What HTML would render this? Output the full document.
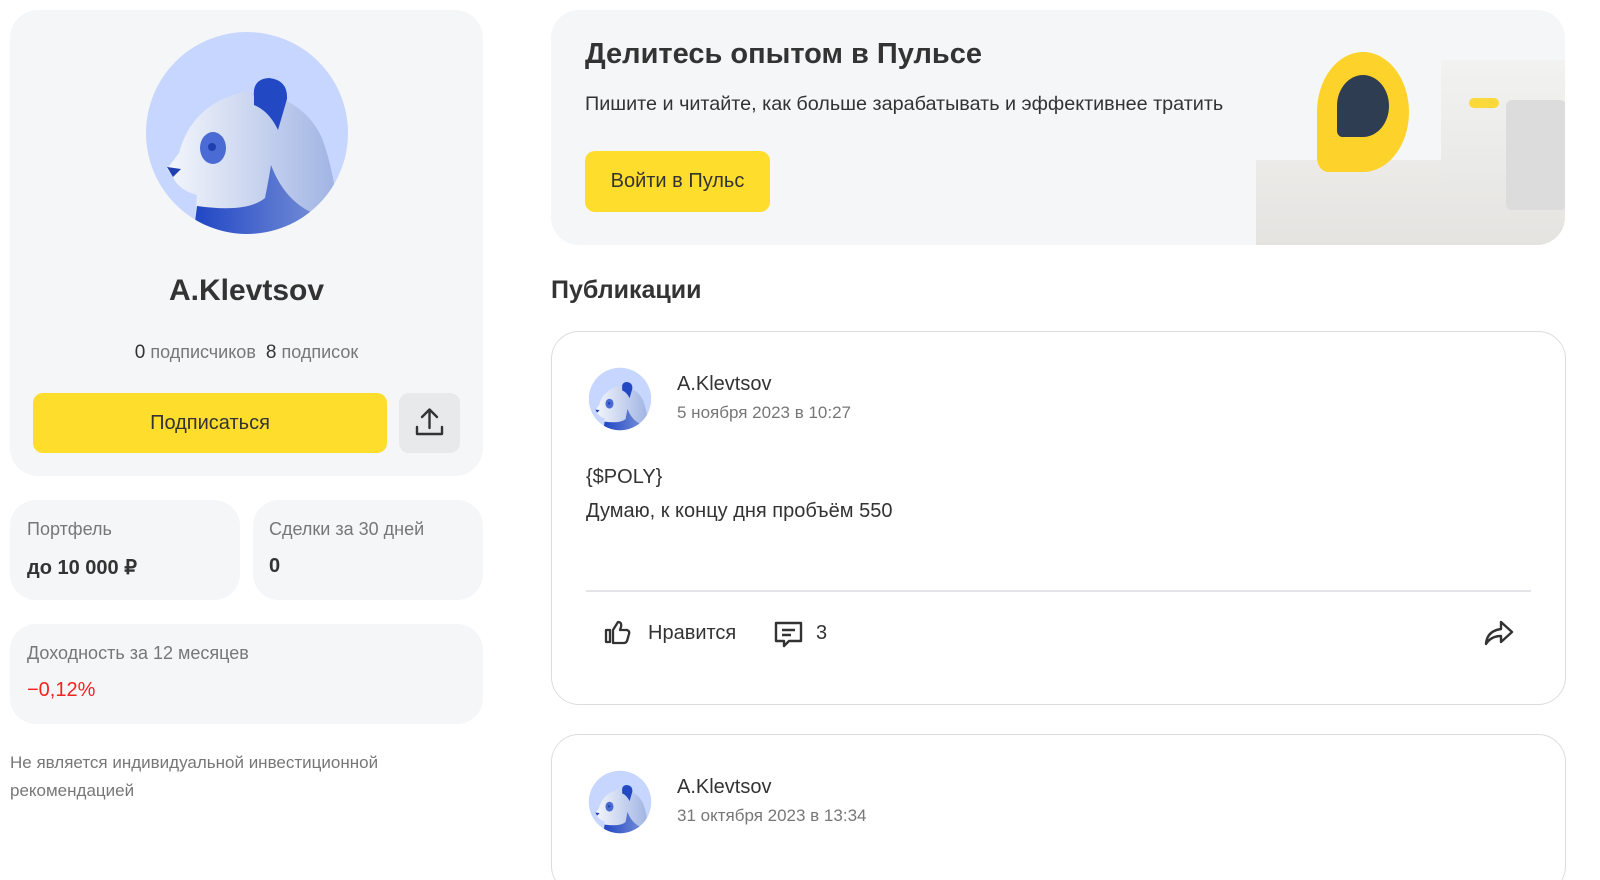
<!DOCTYPE html>
<html style="width:1600px;height:880px;overflow:hidden"><head><meta charset="utf-8"><style>
*{box-sizing:border-box;margin:0;padding:0}
html,body{width:1600px;height:880px;overflow:hidden}
body{background:#fff;font-family:"Liberation Sans",sans-serif;color:#333;position:relative}
.a{position:absolute}
.card{background:#f5f6f7;border-radius:28px}
.lbl{font-size:18px;color:#777}
.val{font-size:20px;font-weight:bold;color:#333}
.post{border:1.5px solid #dcdde0;border-radius:28px;background:#fff}
</style></head><body>
<svg width="0" height="0" style="position:absolute"><defs>
<symbol id="panda" viewBox="0 0 220 220">
<circle cx="110" cy="110" r="101" fill="#c6d6ff"/>
<clipPath id="cc"><circle cx="110" cy="110" r="101"/></clipPath>
<linearGradient id="g1" x1="0" x2="1"><stop offset="0" stop-color="#f4f6fb"/><stop offset="1" stop-color="#9fb3e3"/></linearGradient>
<linearGradient id="g2" x1="0" x2="1"><stop offset="0" stop-color="#1f45c4"/><stop offset="1" stop-color="#7d95d8"/></linearGradient>
<g clip-path="url(#cc)">
<path d="M58 200 L60 172 Q45 168 38 158 Q34 150 30 146 L42 130 Q55 80 110 68 Q165 72 185 115 Q198 150 202 200 Z" fill="url(#g1)"/>
<path d="M56 215 L60 183 Q110 190 128 175 Q132 155 134 142 Q150 185 190 195 L195 230 L56 230Z" fill="url(#g2)"/>
<path d="M117 74 Q115 56 132 55 Q151 57 150 76 L141 107 Q132 88 117 82Z" fill="#2248c4"/>
<ellipse cx="76" cy="125" rx="13" ry="16" fill="#4a6bd4"/>
<circle cx="75" cy="124" r="4" fill="#1e3fb0"/>
<path d="M30 144 L44 146 L36 154Z" fill="#1e3fb0"/>
</g></symbol></defs></svg>

<div class="a card" style="left:10px;top:10px;width:473px;height:466px"></div>
<svg class="a" style="left:137px;top:23px" width="220" height="220"><use href="#panda"/></svg>
<div class="a" style="left:0;width:493px;top:274px;text-align:center;font-size:30px;font-weight:bold;color:#333">A.Klevtsov</div>
<div class="a" style="left:0;width:493px;top:342px;text-align:center;font-size:18px;color:#777"><b style="color:#333;font-weight:normal;font-size:19px">0</b> подписчиков &nbsp;<b style="color:#333;font-weight:normal;font-size:19px">8</b> подписок</div>
<div class="a" style="left:33px;top:393px;width:354px;height:60px;background:#ffdd2d;border-radius:10px;text-align:center;line-height:60px;font-size:20px;color:#333">Подписаться</div>
<div class="a" style="left:399px;top:393px;width:61px;height:60px;background:#e8e9eb;border-radius:10px"><svg width="61" height="60" viewBox="0 0 61 60"><path d="M30.5 17v18M23 24l7.5-7.5L38 24M18 34v7h25v-7" stroke="#333" stroke-width="2.4" fill="none" stroke-linecap="round" stroke-linejoin="round"/></svg></div>

<div class="a card" style="left:10px;top:500px;width:230px;height:100px;border-radius:26px"></div>
<div class="a lbl" style="left:27px;top:519px">Портфель</div>
<div class="a val" style="left:27px;top:555px">до 10 000 ₽</div>
<div class="a card" style="left:253px;top:500px;width:230px;height:100px;border-radius:26px"></div>
<div class="a lbl" style="left:269px;top:519px">Сделки за 30 дней</div>
<div class="a val" style="left:269px;top:555px">0</div>
<div class="a card" style="left:10px;top:624px;width:473px;height:100px;border-radius:26px"></div>
<div class="a lbl" style="left:27px;top:643px">Доходность за 12 месяцев</div>
<div class="a val" style="left:27px;top:679px;color:#f52222;font-weight:normal">−0,12%</div>
<div class="a" style="left:10px;top:749px;font-size:17px;color:#777;line-height:28px">Не является индивидуальной инвестиционной<br>рекомендацией</div>

<div class="a card" style="left:551px;top:10px;width:1014px;height:235px;overflow:hidden">
<div style="position:absolute;left:705px;top:150px;width:309px;height:85px;background:linear-gradient(180deg,#ecebe8,#e4e3e0)"></div>
<div style="position:absolute;left:890px;top:50px;width:124px;height:130px;background:linear-gradient(180deg,#f2f2f0,#e8e8e6)"></div>
<div style="position:absolute;left:955px;top:90px;width:60px;height:110px;background:#dcdcdc;border-radius:6px"></div>
<div style="position:absolute;left:918px;top:88px;width:30px;height:10px;background:#fcd93a;border-radius:5px"></div>
<div style="position:absolute;left:766px;top:42px;width:92px;height:120px;background:#fdd22a;border-radius:50% 50% 50% 12%"></div>
<div style="position:absolute;left:786px;top:65px;width:52px;height:62px;background:#2f3d52;border-radius:50% 50% 50% 10%"></div>
</div>
<div class="a" style="left:585px;top:38px;font-size:29px;font-weight:bold;color:#333">Делитесь опытом в Пульсе</div>
<div class="a" style="left:585px;top:93px;font-size:19.8px;color:#333">Пишите и читайте, как больше зарабатывать и эффективнее тратить</div>
<div class="a" style="left:585px;top:151px;width:185px;height:61px;background:#ffdd2d;border-radius:10px;text-align:center;line-height:61px;font-size:20px;color:#333">Войти в Пульс</div>

<div class="a" style="left:551px;top:276px;font-size:25px;font-weight:bold;color:#333">Публикации</div>

<div class="a post" style="left:551px;top:331px;width:1015px;height:374px"></div>
<svg class="a" style="left:586px;top:365px" width="68" height="68" viewBox="0 0 220 220"><use href="#panda"/></svg>
<div class="a" style="left:677px;top:373px;font-size:20px;color:#333">A.Klevtsov</div>
<div class="a" style="left:677px;top:403px;font-size:17px;color:#777">5 ноября 2023 в 10:27</div>
<div class="a" style="left:586px;top:460px;font-size:20px;color:#333;line-height:34px">{$POLY}<br>Думаю, к концу дня пробъём 550</div>
<div class="a" style="left:586px;top:590px;width:945px;height:2px;background:#e4e5e8"></div>
<svg class="a" style="left:603px;top:619px" width="30" height="28" viewBox="0 0 30 28"><path d="M3 11v12h4V11zM10 11l5-8q4 0 3 5l-1 3h7q3 1 2 4l-2 7q-1 2-3 2H10z" stroke="#333" stroke-width="2.3" fill="none" stroke-linejoin="round"/></svg>
<div class="a" style="left:648px;top:622px;font-size:20px;color:#333">Нравится</div>
<svg class="a" style="left:773px;top:619px" width="32" height="32" viewBox="0 0 32 32"><path d="M3 4h25v18H16l-5 5v-5H3z" stroke="#333" stroke-width="2.4" fill="none" stroke-linejoin="round"/><path d="M9 11h13M9 16h9" stroke="#333" stroke-width="2.4"/></svg>
<div class="a" style="left:816px;top:622px;font-size:20px;color:#333">3</div>
<svg class="a" style="left:1483px;top:618px" width="32" height="30" viewBox="0 0 32 30"><path d="M18 4l11 10-11 10v-6Q8 18 3 26q1-13 15-15z" stroke="#333" stroke-width="2.4" fill="none" stroke-linejoin="round"/></svg>

<div class="a post" style="left:551px;top:734px;width:1015px;height:160px"></div>
<svg class="a" style="left:586px;top:768px" width="68" height="68" viewBox="0 0 220 220"><use href="#panda"/></svg>
<div class="a" style="left:677px;top:776px;font-size:20px;color:#333">A.Klevtsov</div>
<div class="a" style="left:677px;top:806px;font-size:17px;color:#777">31 октября 2023 в 13:34</div>
</body></html>
